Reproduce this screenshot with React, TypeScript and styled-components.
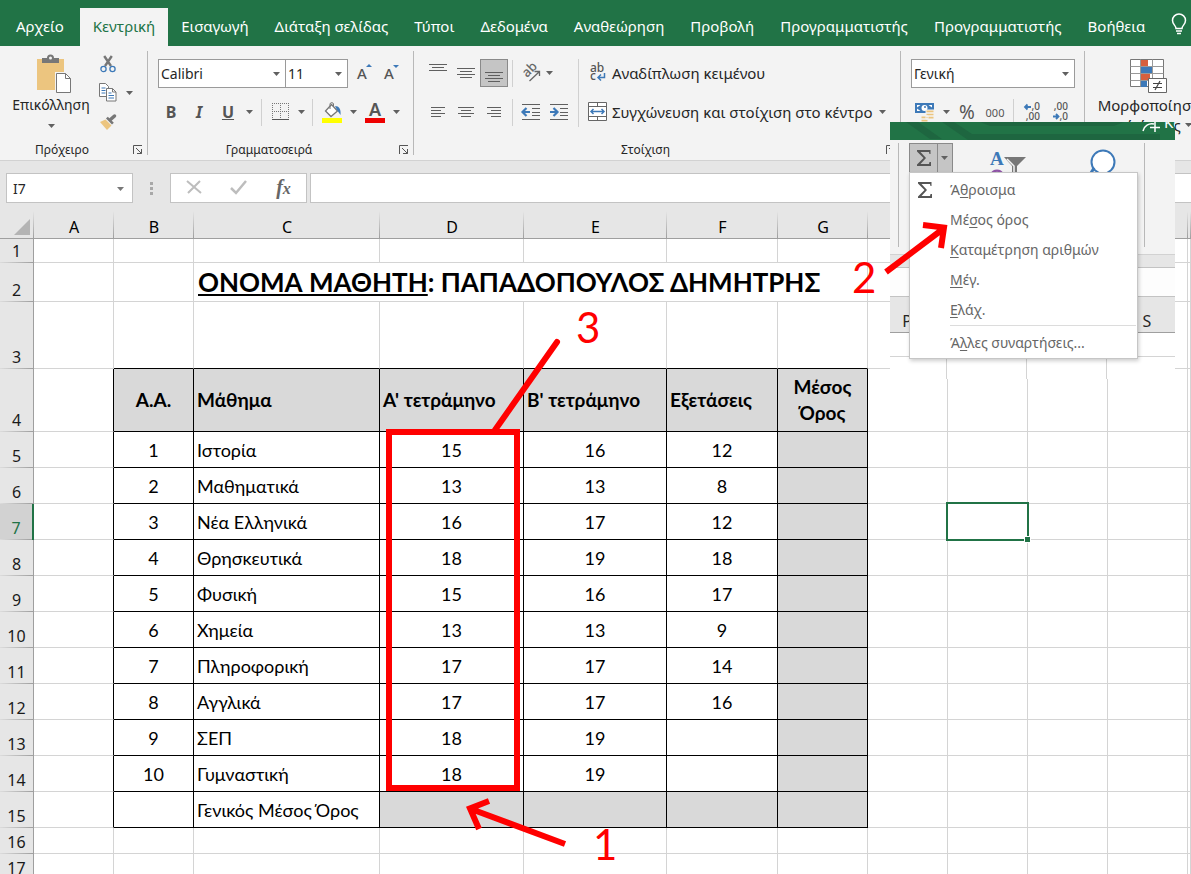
import React from 'react';
import styled, { createGlobalStyle, css } from 'styled-components';

const UI = '"Noto Sans", "Open Sans", sans-serif';
const SHEET = 'Lato, "Noto Sans", sans-serif';
const GREEN = '#217346';
const BLUE = '#3d79b8';
const INK = '#555555';

const GlobalStyle = createGlobalStyle`
  *, *::before, *::after { box-sizing: border-box; }
  body { margin: 0; background: #ffffff; font-family: ${UI}; color: #262626; }
  button, input, select { font: inherit; color: inherit; }
  svg { overflow: visible; }
`;

const Page = styled.div`
  position: relative;
  height: 100vh;
  overflow: hidden;
  display: flex;
  flex-direction: column;
`;

/* ---------- tabs ---------- */
const TabBar = styled.nav`
  flex: none;
  height: 46px;
  padding: 8px 0 0 3px;
  background: ${GREEN};
  display: flex;
`;

const Tab = styled.button<{ $active?: boolean }>`
  flex: none;
  height: 38px;
  padding: 0 13px 2px;
  border: 0;
  font-size: 15px;
  line-height: 20px;
  white-space: nowrap;
  background: ${p => (p.$active ? '#f3f3f3' : 'transparent')};
  color: ${p => (p.$active ? GREEN : '#ffffff')};
  margin-left: ${p => (p.$active ? '3px' : '0')};
`;

/* ---------- ribbon ---------- */
const Ribbon = styled.div`
  flex: none;
  height: 115px;
  display: flex;
  overflow: hidden;
  background: #f3f3f3;
  border-bottom: 1px solid #d2d2d2;
`;

const Group = styled.section<{ $w?: number }>`
  flex: ${p => (p.$w ? `0 0 ${p.$w}px` : '1 0 auto')};
  display: flex;
  flex-direction: column;
  padding-top: 13px;
`;

const Divider = styled.div`
  flex: none;
  width: 1px;
  margin: 5px 0;
  background: #b8b8b8;
`;

const Body = styled.div<{ $pad?: number }>`
  display: flex;
  height: 67px;
  padding-left: ${p => p.$pad ?? 10}px;
`;

const Rows = styled.div`
  flex: none;
  display: flex;
  flex-direction: column;
  gap: 11px;
`;

const Line = styled.div<{ $gap?: number }>`
  display: flex;
  align-items: center;
  height: 28px;
  gap: ${p => p.$gap ?? 0}px;
`;

const GroupFoot = styled.div`
  margin-top: 15px;
  display: flex;
  align-items: center;
  height: 18px;
  font-size: 12px;
  line-height: 18px;
`;

const GroupLabel = styled.span`
  flex: 1;
  text-align: center;
`;

const Launcher = styled.button`
  width: 23px;
  height: 18px;
  padding: 0 0 0 9px;
  border: 0;
  background: none;
  display: flex;
  align-items: center;
`;

const Tool = styled.button<{ $w?: number; $on?: boolean }>`
  flex: none;
  width: ${p => p.$w ?? 28}px;
  height: 28px;
  padding: 0;
  display: flex;
  align-items: center;
  justify-content: center;
  border: ${p => (p.$on ? '1px solid #8a8a8a' : '0')};
  background: ${p => (p.$on ? '#c5c5c5' : 'transparent')};
  font-size: 16px;
  color: ${INK};
`;

const WideTool = styled.button`
  flex: none;
  height: 28px;
  padding: 0;
  border: 0;
  background: none;
  display: flex;
  align-items: center;
  gap: 4px;
  font-size: 15px;
  white-space: nowrap;
`;

const BigTool = styled.button<{ $w: number; $size: number }>`
  flex: none;
  width: ${p => p.$w}px;
  padding: 0;
  height: 76px;
  border: 0;
  background: none;
  display: flex;
  flex-direction: column;
  align-items: center;
  font-size: ${p => p.$size}px;
  line-height: 20px;
  white-space: nowrap;
  > svg { flex: none; }
  span { display: flex; align-items: center; gap: 4px; }
`;

const PasteTool = styled(BigTool)`
  margin-top: -5px;
  height: 80px;
  span { margin: 1px 0 9px; }
`;

const Rule = styled.span<{ $tall?: boolean }>`
  flex: none;
  width: 1px;
  height: ${p => (p.$tall ? '68px' : '27px')};
  margin: 0 ${p => (p.$tall ? '9px 0 5px' : '5px')};
  background: #d0d0d0;
`;

const SmallRule = styled(Rule)`
  margin: 0 4px;
`;

const Picker = styled.div<{ $w: number }>`
  position: relative;
  flex: none;
  width: ${p => p.$w}px;
  height: 29px;
  border: 1px solid #9a9a9a;
  background: #ffffff;
  & + & { border-left: 0; }
  select {
    width: 100%;
    height: 27px;
    padding: 0 2px;
    border: 0;
    background: none;
    appearance: none;
    font-size: 14px;
  }
  svg { position: absolute; right: 5px; top: 12px; pointer-events: none; }
`;

const Stack = styled.div`
  display: flex;
  flex-direction: column;
  gap: 10px;
  margin-top: -5px;
`;

const StackRow = styled.div`
  display: flex;
  align-items: center;
  height: 19px;
  gap: 1px;
`;

const SmallTool = styled(Tool)`
  height: 19px;
`;

const PercentTool = styled(Tool)`
  font-size: 19px;
`;

const ThousandsTool = styled(Tool)`
  font-size: 11px;
`;

/* ---------- formula bar ---------- */
const FormulaBar = styled.div`
  flex: none;
  height: 50px;
  padding: 12px 0 8px 6px;
  background: #e6e6e6;
  display: flex;
`;

const barBox = css`
  height: 30px;
  background: #ffffff;
  border: 1px solid #c3c3c3;
`;

const NameBox = styled.div`
  ${barBox}
  position: relative;
  flex: none;
  width: 127px;
  input {
    width: 100px;
    height: 28px;
    padding: 0 6px;
    border: 0;
    outline: 0;
    background: none;
    font-size: 14px;
  }
  svg { position: absolute; right: 8px; top: 13px; }
`;

const Dots = styled.div`
  flex: none;
  width: 37px;
  display: flex;
  flex-direction: column;
  align-items: center;
  justify-content: center;
  height: 30px;
  gap: 2px;
  i { width: 3px; height: 3px; background: #a8a8a8; }
`;

const FormulaButtons = styled.div`
  ${barBox}
  flex: none;
  width: 137px;
  display: flex;
  align-items: center;
  button { flex: 1; height: 28px; padding: 0; border: 0; background: none; }
`;

const FxButton = styled.button`
  font: italic 700 20px/24px "Liberation Serif", serif;
  color: #666666;
  small { font-size: 16px; }
`;

const FormulaInput = styled.input`
  ${barBox}
  flex: 1;
  margin-left: 3px;
  border-right: 0;
  outline: 0;
  padding: 0 6px;
`;

/* ---------- sheet ---------- */
const Sheet = styled.table`
  flex: none;
  width: 100%;
  min-width: 1188px;
  table-layout: fixed;
  border-collapse: separate;
  border-spacing: 0;
  font-family: ${SHEET};
  font-size: 18px;
  line-height: 22px;
  color: #000000;
`;

const ColHead = styled.th`
  height: 28px;
  padding: 4px 0 0;
  font: 400 16px/20px ${UI};
  border-bottom: 1px solid #9f9f9f;
  background: linear-gradient(#e6e6e6, #9f9f9f) right / 1px 100% no-repeat #e6e6e6;
`;

const Corner = styled(ColHead)`
  text-align: right;
  line-height: 0;
  padding: 4px 4px 0 0;
`;

const RowHead = styled.th<{ $h: number; $on?: boolean }>`
  height: ${p => p.$h}px;
  padding: 0 0 2px;
  vertical-align: bottom;
  font: 400 16px/20px ${UI};
  border-right: ${p => (p.$on ? `2px solid ${GREEN}` : '1px solid #9f9f9f')};
  color: ${p => (p.$on ? GREEN : '#1a1a1a')};
  background: linear-gradient(90deg, #dcdcdc, #9f9f9f) bottom / 100% 1px no-repeat
    ${p => (p.$on ? '#d2d2d2' : '#e6e6e6')};
`;

type CellProps = { $r?: boolean; $b?: boolean; $fill?: boolean; $left?: boolean; $bold?: boolean };
const Cell = styled.td<CellProps>`
  position: relative;
  padding: ${p => (p.$left ? '0 0 0 3px' : '0')};
  text-align: ${p => (p.$left ? 'left' : 'center')};
  white-space: nowrap;
  font-weight: ${p => (p.$bold ? 700 : 400)};
  font-size: ${p => (p.$bold ? 19 : 18)}px;
  background: ${p => (p.$fill ? '#d9d9d9' : '#ffffff')};
  border-right: 1px solid ${p => (p.$r ? '#000000' : '#d4d4d4')};
  border-bottom: 1px solid ${p => (p.$b ? '#000000' : '#d4d4d4')};
`;

const TitleCell = styled(Cell)`
  font-size: 26px;
  line-height: 34px;
  font-weight: 700;
  padding-left: 4px;
`;

const HeadCell = styled(Cell)`
  line-height: 26px;
`;

const Selection = styled.span`
  position: absolute;
  z-index: 1;
  inset: -2px;
  border: 2px solid ${GREEN};
  &::after {
    content: '';
    position: absolute;
    right: -4px;
    bottom: -4px;
    width: 7px;
    height: 7px;
    background: ${GREEN};
    border: 1px solid #ffffff;
  }
`;

/* ---------- floating excerpt with the AutoSum menu ---------- */
const Excerpt = styled.aside`
  position: absolute;
  left: 890px;
  top: 122px;
  width: 285px;
  height: 257px;
  overflow: hidden;
  background: #ffffff;
  display: flex;
  flex-direction: column;
`;

const ExcerptTop = styled.div`
  flex: none;
  height: 18px;
  background: ${GREEN};
  display: flex;
  overflow: hidden;
  color: #ffffff;
  font-size: 15px;
  line-height: 20px;
  span { flex: none; margin: -10px 0 0 4px; }
  svg { flex: none; overflow: hidden; }
`;

const ExcerptRibbon = styled.div`
  flex: none;
  height: 114px;
  background: #f3f3f3;
  padding: 3px 0 0 8px;
  display: flex;
  align-items: flex-start;
`;

const ExcerptRule = styled.i`
  flex: none;
  width: 1px;
  height: 104px;
  background: #b8b8b8;
`;

const SumButton = styled.button`
  flex: none;
  height: 30px;
  padding: 0;
  width: 44px;
  margin: 0 36px 0 10px;
  border: 1px solid #8a8a8a;
  background: linear-gradient(#8a8a8a, #8a8a8a) 27px 0 / 1px 100% no-repeat #c5c5c5;
  display: grid;
  grid-template-columns: 27px 15px;
  align-items: center;
  justify-items: center;
`;

const SortSlot = styled.div`
  flex: none;
  height: 30px;
  padding-top: 5px;
`;

const FindSlot = styled.div`
  flex: none;
  width: 117px;
  padding: 6px 0 0 62px;
`;

const ExcerptBand = styled.div`
  flex: none;
  height: 14px;
  background: #e6e6e6;
  border-top: 1px solid #d2d2d2;
  border-bottom: 1px solid #c3c3c3;
`;

const ExcerptFormula = styled.div`
  flex: none;
  height: 29px;
  background: #fdfdfd;
  border-bottom: 1px solid #c3c3c3;
`;

const ExcerptGrid = styled.div<{ $head?: boolean }>`
  flex: none;
  display: grid;
  grid-template-columns: repeat(4, 80px);
  margin-left: -23px;
  width: 320px;
  text-align: center;
  font-size: 16px;
  line-height: 20px;
  background: ${p => (p.$head ? '#e6e6e6' : '#ffffff')};
  height: ${p => (p.$head ? 36 : 24)}px;
  border-bottom: 1px solid ${p => (p.$head ? '#9f9f9f' : '#d4d4d4')};
  padding-top: ${p => (p.$head ? 14 : 0)}px;
  span { border-right: ${p => (p.$head ? '0' : '1px solid #d4d4d4')}; }
`;

const Menu = styled.ul`
  position: absolute;
  left: 909px;
  top: 172px;
  width: 229px;
  margin: 0;
  padding: 2px 1px 0;
  list-style: none;
  background: #ffffff;
  border: 1px solid #c6c6c6;
  box-shadow: 1px 2px 4px rgba(0, 0, 0, 0.2);
`;

const MenuItem = styled.li<{ $last?: boolean }>`
  ${p => p.$last && css`
    &::before {
      content: '';
      display: block;
      height: 1px;
      margin: 0 0 2px 39px;
      background: #dcdcdc;
    }
  `}
  button {
    display: grid;
    grid-template-columns: 39px 1fr;
    align-items: center;
    width: 100%;
    height: 30px;
    padding: 0;
    border: 0;
    background: none;
    text-align: left;
    font-size: 14px;
    line-height: 20px;
    color: #666666;
  }
  u { text-underline-offset: 2px; }
  svg { margin-left: 5px; }
`;

/* ---------- red annotations ---------- */
const Marks = styled.svg`
  position: absolute;
  left: 0;
  top: 0;
  pointer-events: none;
`;

const Mark = styled.span<{ $x: number; $y: number }>`
  position: absolute;
  left: ${p => p.$x}px;
  top: ${p => p.$y}px;
  font: 400 42px/44px ${SHEET};
  color: #ff0000;
`;

/* ---------- icons ---------- */
const Caret = ({ color = '#606060' }: { color?: string }) => (
  <svg width="7" height="4" viewBox="0 0 7 4"><path d="M0 0h7L3.500 4z" fill={color} /></svg>
);

const Bars = ({ rows, w = 18, h = 20 }: { rows: [number, number, number][]; w?: number; h?: number }) => (
  <svg width={w} height={h}>
    {rows.map(([x, y, len]) => <rect key={y} x={x} y={y} width={len} height="1" fill="#5f5f5f" />)}
  </svg>
);

const Bulb = () => (
  <svg width="16" height="22" viewBox="0 0 16 22" fill="none" stroke="#fff" strokeWidth="1.500">
    <path d="M5 15.500c0-3-3.500-4-3.500-8a6.500 6.500 0 0 1 13 0c0 4-3.500 5-3.500 8zM5 18h6M6 20.500h4" />
  </svg>
);

const PasteIcon = () => (
  <svg width="30" height="40" viewBox="0 0 30 40">
    <rect x="1" y="5" width="27" height="31" fill="#ecc57f" />
    <path d="M6 9V4h5a3.500 3.500 0 0 1 7 0h5v5z" fill="#777" />
    <circle cx="14.500" cy="4" r="1.500" fill="#f3f3f3" />
    <path d="M19 18h11l6 5v17H19z" fill="#f3f3f3" />
    <path d="M20.500 19.500h9l5 5v14h-14z" fill="#fff" stroke="#777" />
    <path d="M29.500 19.500v5h5" fill="none" stroke="#777" />
  </svg>
);

const CutIcon = () => (
  <svg width="16" height="19" viewBox="0 0 16 19" fill="none">
    <path d="M4.200 2L11 12M11.800 2L5 12" stroke="#777" strokeWidth="2.400" />
    <circle cx="3.500" cy="15" r="2.600" stroke={BLUE} strokeWidth="1.300" />
    <circle cx="12.500" cy="15" r="2.600" stroke={BLUE} strokeWidth="1.300" />
  </svg>
);

const CopyIcon = () => (
  <svg width="18" height="19" viewBox="0 0 18 19">
    <path d="M.5.5h6l3 3v10h-9z" fill="#fff" stroke="#777" />
    <path d="M2.500 5h4M2.500 7.500h4M2.500 10h4" stroke={BLUE} />
    <path d="M7.500 5.500h6l3.500 3.500v9H7.500z" fill="#fff" stroke="#777" />
    <path d="M13.500 5.500V9H17" fill="none" stroke="#777" />
    <path d="M9.500 10h3M9.500 12.500h5.500M9.500 15h5.500" stroke={BLUE} />
  </svg>
);

const BrushIcon = () => (
  <svg width="18" height="17" viewBox="0 0 18 17">
    <path d="M1 9l5.500-2.500 6 6L8 17z" fill="#ecc57f" />
    <path d="M7 5.500l1.800-1.800 6 6-1.800 1.800z" fill="#777" />
    <path d="M11.500 6.500L15.500 3" stroke="#777" strokeWidth="3.500" strokeLinecap="round" />
  </svg>
);

const LauncherIcon = () => (
  <svg width="10" height="10" viewBox="0 0 10 10" fill="none" stroke="#555">
    <path d="M.5 9V.5H9M3 3l5.500 5.500M8.500 4v4.500H4" />
  </svg>
);

const FontStep = ({ down }: { down?: boolean }) => (
  <svg width="16" height="20" viewBox="0 0 16 20">
    <text x="1" y="16" fontFamily={UI} fontSize="15" fontWeight="500" fill="#555">A</text>
    <path d={down ? 'M10 2h6l-3 3z' : 'M10 4h6l-3-3z'} fill={BLUE} />
  </svg>
);

const BorderIcon = () => (
  <svg width="18" height="18" viewBox="0 0 18 18" fill="none" stroke="#777">
    <path d="M0 .5h17M0 8.500h17M.5 0v16M8.500 0v16M16.500 0v16" strokeDasharray="1 1" shapeRendering="crispEdges" />
    <path d="M0 16.500h17" stroke="#555" />
  </svg>
);

const FillIcon = () => (
  <svg width="20" height="22" viewBox="0 0 20 22">
    <path d="M9.500 3.500l6 6.500-6.500 5.500L3.500 10z" fill="#fff" stroke="#777" strokeWidth="1.300" />
    <path d="M8 8V3a1.800 1.800 0 0 1 3.500 0v3" fill="none" stroke="#777" />
    <path d="M13 5c4 0 6 3 5.500 9L15 9z" fill={BLUE} />
    <rect y="17" width="20" height="5" fill="#ffff00" />
  </svg>
);

const FontColorIcon = () => (
  <svg width="20" height="22" viewBox="0 0 20 22">
    <text x="10" y="15" textAnchor="middle" fontFamily={UI} fontSize="18" fontWeight="600" fill={INK}>A</text>
    <rect y="17" width="20" height="5" fill="#ee0000" />
  </svg>
);

const OrientIcon = () => (
  <svg width="20" height="20" viewBox="0 0 20 20">
    <text x="0" y="0" transform="translate(6 15) rotate(-45)" fontFamily={UI} fontSize="13" fontWeight="500" fill="#666">ab</text>
    <path d="M8.500 18L18 9M13.500 8.500h5V13" fill="none" stroke="#666" strokeWidth="1.300" />
  </svg>
);

const IndentIcon = ({ right }: { right?: boolean }) => (
  <svg width="18" height="18" viewBox="0 0 18 18">
    <path d="M0 1.500h18M10 5.500h8M10 9.500h8M10 12.500h8M0 16.500h18" stroke="#5f5f5f" />
    <path
      d={right ? 'M0 9h7M3.500 5l4 4-4 4' : 'M8 9H1M4.500 5l-4 4 4 4'}
      fill="none" stroke={BLUE} strokeWidth="2.200"
    />
  </svg>
);

const WrapIcon = () => (
  <svg width="20" height="20" viewBox="0 0 20 20">
    <text x="2" y="9" fontFamily={UI} fontSize="12" fontWeight="500" fill={INK}>ab</text>
    <text x="2" y="17" fontFamily={UI} fontSize="12" fontWeight="500" fill={INK}>c</text>
    <path d="M16.500 10v4.500h-6M13 11.500l-3 3 3 3" fill="none" stroke={BLUE} strokeWidth="1.500" />
  </svg>
);

const MergeIcon = () => (
  <svg width="20" height="20" viewBox="0 0 20 20" fill="none">
    <path d="M.5.5h18v18H.5zM.5 4.500h18M.5 14.500h18M9.500.5v4M9.500 14.500v4" fill="#fff" stroke="#666" />
    <path d="M3 9.500h13M5.500 7L3 9.500 5.500 12M13.500 7L16 9.500 13.500 12" stroke={BLUE} strokeWidth="1.500" />
  </svg>
);

const MoneyIcon = () => (
  <svg width="20" height="20" viewBox="0 0 20 20">
    <path d="M0 1h19v10H0z" fill={BLUE} />
    <path d="M2 3h3.500L2 5.500zM17 3h-3.500L17 5.500zM2 9h3.500L2 6.500z" fill="#fff" />
    <circle cx="9.500" cy="6" r="3" fill="#fff" />
    <circle cx="10" cy="5" r="1" fill={BLUE} />
    <path d="M11 8h8v3h-8zM11 11h8v3h-8zM6 14h7v3H6zM11 14h8v3h-8zM6 17h7v3H6z" fill="#ecc57f" stroke="#f3f3f3" />
  </svg>
);

const DecimalIcon = ({ less }: { less?: boolean }) => (
  <svg width="18" height="20" viewBox="0 0 18 20" fontFamily={UI} fontSize="10" fontWeight="500">
    <text x="17" y="8" textAnchor="end" fill={INK}>{less ? ',00' : ',0'}</text>
    <text x="17" y="18" textAnchor="end" fill={INK}>{less ? ',0' : ',00'}</text>
    <path
      d={less ? 'M2 14.500h6M5 12l2.500 2.500L5 17' : 'M8 5H2M4.500 2.500L2 5l2.500 2.500'}
      fill="none" stroke={BLUE} strokeWidth="1.800"
    />
  </svg>
);

const CondIcon = () => (
  <svg width="38" height="36" viewBox="0 0 38 36">
    <path d="M.5.5h33v27H.5z" fill="#fff" stroke="#777" />
    <path d="M11 1h7v6h-7zM11 15h9v6h-9z" fill="#d6603e" />
    <path d="M11 8h11v6H11zM11 22h6v6h-6z" fill={BLUE} />
    <path d="M.5 7.500h33M.5 14.500h33M.5 21.500h33M10.500.5v27M22.500.5v27" fill="none" stroke="#999" />
    <path d="M18.500 19.500h18v14h-18z" fill="#fff" stroke="#666" />
    <path d="M23 24.500h9M23 28.500h9M30 22l-5 9" stroke="#444" strokeWidth="1.200" />
  </svg>
);

const Sigma = () => (
  <svg width="18" height="18" viewBox="0 0 18 18">
    <path d="M15.500 5V1H2v1.500L8.500 9 2 15.500V17h14v-4h-1.500l-.5 2H5.500L11 9 5.500 3h8.500l.5 2z" fill={INK} />
  </svg>
);

const SortFilterIcon = () => (
  <svg width="38" height="30" viewBox="0 0 38 30">
    <text x="1" y="17" fontFamily='"Liberation Serif", serif' fontSize="19" fontWeight="700" fill={BLUE}>A</text>
    <path d="M2.500 26a6 5.500 0 0 1 11 0" fill="none" stroke="#9055a8" strokeWidth="2.200" />
    <path d="M15 9h22l-9 9v10h-5V18z" fill="#777" />
    <path d="M18 11l7 7v10" fill="none" stroke="#f3f3f3" strokeWidth="1.500" />
  </svg>
);

const FindIcon = () => (
  <svg width="28" height="24" viewBox="0 0 28 24">
    <circle cx="14" cy="13" r="11.500" fill="#fff" stroke={BLUE} strokeWidth="2" />
    <path d="M5 19l-3 5" stroke={BLUE} strokeWidth="3" />
  </svg>
);

const StripArt = () => (
  <svg width="270" height="18" viewBox="0 0 270 18">
    <path d="M16 0h12l24 17H40zM52 0h12l18 12h188v6H78zM90 0h144l-10 4H100z" fill="#1e6640" />
    <path d="M253 9a9 9 0 0 1 11-7M265 0v10M260 5.500h10" fill="none" stroke="#fff" strokeWidth="1.500" />
  </svg>
);

/* ---------- data ---------- */
const tabs = ['Αρχείο', 'Κεντρική', 'Εισαγωγή', 'Διάταξη σελίδας', 'Τύποι', 'Δεδομένα', 'Αναθεώρηση',
  'Προβολή', 'Προγραμματιστής', 'Προγραμματιστής', 'Βοήθεια'];

const columns: [string, number][] = [['A', 80], ['B', 80], ['C', 186], ['D', 144], ['E', 143], ['F', 111],
  ['G', 90], ['H', 80], ['I', 80], ['J', 80], ['K', 80]];

const grades: string[][] = [
  ['1', 'Ιστορία', '15', '16', '12'],
  ['2', 'Μαθηματικά', '13', '13', '8'],
  ['3', 'Νέα Ελληνικά', '16', '17', '12'],
  ['4', 'Θρησκευτικά', '18', '19', '18'],
  ['5', 'Φυσική', '15', '16', '17'],
  ['6', 'Χημεία', '13', '13', '9'],
  ['7', 'Πληροφορική', '17', '17', '14'],
  ['8', 'Αγγλικά', '17', '17', '16'],
  ['9', 'ΣΕΠ', '18', '19', ''],
  ['10', 'Γυμναστική', '18', '19', ''],
];

const Blank = ({ n }: { n: number }) => <>{Array.from({ length: n }, (_, i) => <Cell key={i} />)}</>;

const Foot = ({ label, launch }: { label: string; launch?: boolean }) => (
  <GroupFoot>
    <GroupLabel>{label}</GroupLabel>
    {launch && <Launcher aria-label={label}><LauncherIcon /></Launcher>}
  </GroupFoot>
);

export default function App() {
  return (
    <Page>
      <GlobalStyle />
      <TabBar>
        {tabs.map((t, i) => <Tab key={i} $active={i === 1}>{t}</Tab>)}
        <Tab aria-label="Ιδέες"><Bulb /></Tab>
      </TabBar>

      <Ribbon>
        <Group $w={147}>
          <Body $pad={6}>
            <PasteTool $w={90} $size={14}><PasteIcon /><span>Επικόλληση</span><Caret /></PasteTool>
            <Stack>
              <StackRow><SmallTool $w={24} aria-label="Αποκοπή"><CutIcon /></SmallTool></StackRow>
              <StackRow>
                <SmallTool $w={24} aria-label="Αντιγραφή"><CopyIcon /></SmallTool>
                <SmallTool $w={16} aria-label="Επιλογές αντιγραφής"><Caret /></SmallTool>
              </StackRow>
              <StackRow><SmallTool $w={24} aria-label="Πινέλο μορφοποίησης"><BrushIcon /></SmallTool></StackRow>
            </Stack>
          </Body>
          <Foot label="Πρόχειρο" launch />
        </Group>
        <Divider />

        <Group $w={265}>
          <Body>
            <Rows>
              <Line>
                <Picker $w={128}>
                  <select aria-label="Γραμματοσειρά"><option>Calibri</option></select><Caret />
                </Picker>
                <Picker $w={62}>
                  <select aria-label="Μέγεθος"><option>11</option></select><Caret />
                </Picker>
                <Tool $w={32} aria-label="Αύξηση"><FontStep /></Tool>
                <Tool $w={22} aria-label="Μείωση"><FontStep down /></Tool>
              </Line>
              <Line>
                <Tool $w={26}><b>B</b></Tool>
                <Tool $w={30}><b><i>I</i></b></Tool>
                <Tool><b><u>U</u></b></Tool>
                <Tool $w={14} aria-label="Υπογράμμιση"><Caret /></Tool>
                <Rule />
                <Tool aria-label="Περιγράμματα"><BorderIcon /></Tool>
                <Tool $w={12} aria-label="Επιλογές περιγράμματος"><Caret /></Tool>
                <Rule />
                <Tool aria-label="Χρώμα γεμίσματος"><FillIcon /></Tool>
                <Tool $w={14} aria-label="Επιλογές γεμίσματος"><Caret /></Tool>
                <Tool $w={30} aria-label="Χρώμα γραμματοσειράς"><FontColorIcon /></Tool>
                <Tool $w={12} aria-label="Επιλογές χρώματος"><Caret /></Tool>
              </Line>
            </Rows>
          </Body>
          <Foot label="Γραμματοσειρά" launch />
        </Group>
        <Divider />

        <Group $w={486}>
          <Body>
            <Rows>
              <Line>
                <Tool aria-label="Επάνω"><Bars rows={[[0, 1, 18], [3, 4, 12], [0, 7, 18]]} /></Tool>
                <Tool aria-label="Μέση"><Bars rows={[[0, 5, 18], [3, 8, 12], [0, 11, 18], [3, 14, 12]]} /></Tool>
                <Tool $on aria-label="Κάτω"><Bars rows={[[0, 9, 18], [3, 12, 12], [0, 15, 18], [3, 18, 12]]} /></Tool>
                <SmallRule />
                <Tool aria-label="Προσανατολισμός"><OrientIcon /></Tool>
                <Tool $w={8} aria-label="Επιλογές προσανατολισμού"><Caret /></Tool>
              </Line>
              <Line>
                <Tool aria-label="Αριστερά"><Bars rows={[[2, 5, 14], [2, 8, 10], [2, 11, 14], [2, 14, 10]]} /></Tool>
                <Tool aria-label="Κέντρο"><Bars rows={[[1, 5, 16], [4, 8, 10], [1, 11, 16], [4, 14, 10]]} /></Tool>
                <Tool aria-label="Δεξιά"><Bars rows={[[2, 5, 14], [6, 8, 10], [2, 11, 14], [6, 14, 10]]} /></Tool>
                <SmallRule />
                <Tool aria-label="Μείωση εσοχής"><IndentIcon /></Tool>
                <Tool aria-label="Αύξηση εσοχής"><IndentIcon right /></Tool>
              </Line>
            </Rows>
            <Rule $tall />
            <Rows>
              <Line><WideTool><WrapIcon />Αναδίπλωση κειμένου</WideTool></Line>
              <Line $gap={6}>
                <WideTool><MergeIcon />Συγχώνευση και στοίχιση στο κέντρο</WideTool>
                <Tool $w={8} aria-label="Επιλογές συγχώνευσης"><Caret /></Tool>
              </Line>
            </Rows>
          </Body>
          <Foot label="Στοίχιση" launch />
        </Group>
        <Divider />

        <Group $w={183}>
          <Body>
            <Rows>
              <Line>
                <Picker $w={164}>
                  <select aria-label="Μορφή αριθμού"><option>Γενική</option></select><Caret />
                </Picker>
              </Line>
              <Line>
                <Tool aria-label="Λογιστική μορφή"><MoneyIcon /></Tool>
                <Tool $w={14} aria-label="Επιλογές νομίσματος"><Caret /></Tool>
                <PercentTool>%</PercentTool>
                <ThousandsTool>000</ThousandsTool>
                <SmallRule />
                <Tool aria-label="Αύξηση δεκαδικών"><DecimalIcon /></Tool>
                <Tool aria-label="Μείωση δεκαδικών"><DecimalIcon less /></Tool>
              </Line>
            </Rows>
          </Body>
          <Foot label="Αριθμός" launch />
        </Group>
        <Divider />

        <Group>
          <Body>
            <BigTool $w={108} $size={15}>
              <CondIcon />
              <span>Μορφοποίηση</span>
              <span>υπό όρους <Caret /></span>
            </BigTool>
          </Body>
        </Group>
      </Ribbon>

      <FormulaBar>
        <NameBox>
          <input aria-label="Πλαίσιο ονόματος" defaultValue="I7" />
          <Caret color="#777" />
        </NameBox>
        <Dots><i /><i /><i /></Dots>
        <FormulaButtons>
          <button aria-label="Άκυρο">
            <svg width="16" height="14" viewBox="0 0 16 14"><path d="M1 1l14 12M14 1L2 13" stroke="#bdbdbd" strokeWidth="2" /></svg>
          </button>
          <button aria-label="Εισαγωγή">
            <svg width="18" height="14" viewBox="0 0 18 14"><path d="M1 8l5 5L16 1" fill="none" stroke="#bdbdbd" strokeWidth="2.500" /></svg>
          </button>
          <FxButton>f<small>x</small></FxButton>
        </FormulaButtons>
        <FormulaInput aria-label="Γραμμή τύπων" />
      </FormulaBar>

      <Sheet>
        <colgroup>
          <col style={{ width: 34 }} />
          {columns.map(([c, w]) => <col key={c} style={{ width: w }} />)}
          <col />
        </colgroup>
        <thead>
          <tr>
            <Corner><svg width="16" height="16"><path d="M16 0v16H0z" fill="#b4b4b4" /></svg></Corner>
            {columns.map(([c]) => <ColHead key={c}>{c}</ColHead>)}
            <ColHead />
          </tr>
        </thead>
        <tbody>
          <tr><RowHead $h={24}>1</RowHead><Blank n={12} /></tr>
          <tr>
            <RowHead $h={39}>2</RowHead>
            <Blank n={2} />
            <TitleCell colSpan={5} $left><u>ΟΝΟΜΑ ΜΑΘΗΤΗ</u>: ΠΑΠΑΔΟΠΟΥΛΟΣ ΔΗΜΗΤΡΗΣ</TitleCell>
            <Blank n={5} />
          </tr>
          <tr>
            <RowHead $h={67}>3</RowHead>
            <Cell />
            {Array.from({ length: 6 }, (_, i) => <Cell key={i} $b />)}
            <Blank n={5} />
          </tr>
          <tr>
            <RowHead $h={63}>4</RowHead>
            <Cell $r />
            <Cell $r $b $fill $bold>Α.Α.</Cell>
            <Cell $r $b $fill $bold $left>Μάθημα</Cell>
            <Cell $r $b $fill $bold $left>Α' τετράμηνο</Cell>
            <Cell $r $b $fill $bold $left>Β' τετράμηνο</Cell>
            <Cell $r $b $fill $bold $left>Εξετάσεις</Cell>
            <HeadCell $r $b $fill $bold>Μέσος<br />Όρος</HeadCell>
            <Blank n={5} />
          </tr>
          {grades.map((g, i) => (
            <tr key={g[0]}>
              <RowHead $h={36} $on={i === 2}>{i + 5}</RowHead>
              <Cell $r />
              {g.map((v, j) => <Cell key={j} $r $b $left={j === 1}>{v}</Cell>)}
              <Cell $r $b $fill />
              <Cell />
              <Cell>{i === 2 && <Selection />}</Cell>
              <Blank n={3} />
            </tr>
          ))}
          <tr>
            <RowHead $h={36}>15</RowHead>
            <Cell $r />
            <Cell $r $b />
            <Cell $r $b $left>Γενικός Μέσος Όρος</Cell>
            {Array.from({ length: 4 }, (_, i) => <Cell key={i} $r $b $fill />)}
            <Blank n={5} />
          </tr>
          <tr><RowHead $h={26}>16</RowHead><Blank n={12} /></tr>
          <tr><RowHead $h={26}>17</RowHead><Blank n={12} /></tr>
        </tbody>
      </Sheet>

      <Excerpt>
        <ExcerptTop><StripArt /><span>Κο</span></ExcerptTop>
        <ExcerptRibbon>
          <ExcerptRule />
          <SumButton aria-label="Αυτόματη άθροιση"><Sigma /><Caret /></SumButton>
          <SortSlot><SortFilterIcon /></SortSlot>
          <FindSlot><FindIcon /></FindSlot>
          <ExcerptRule />
        </ExcerptRibbon>
        <ExcerptBand />
        <ExcerptFormula />
        <ExcerptGrid $head><span>P</span><span /><span /><span>S</span></ExcerptGrid>
        <ExcerptGrid><span /><span /><span /><span /></ExcerptGrid>
        <ExcerptGrid><span /><span /><span /><span /></ExcerptGrid>
      </Excerpt>

      <Menu>
        <MenuItem><button><Sigma /><span>Ά<u>θ</u>ροισμα</span></button></MenuItem>
        <MenuItem><button><i /><span>Μέ<u>σ</u>ος όρος</span></button></MenuItem>
        <MenuItem><button><i /><span><u>Κ</u>αταμέτρηση αριθμών</span></button></MenuItem>
        <MenuItem><button><i /><span><u>Μ</u>έγ.</span></button></MenuItem>
        <MenuItem><button><i /><span><u>Ε</u>λάχ.</span></button></MenuItem>
        <MenuItem $last><button><i /><span>Ά<u>λ</u>λες συναρτήσεις...</span></button></MenuItem>
      </Menu>

      <Marks width="1191" height="874" fill="none" stroke="#ff0000">
        <rect x="389" y="432" width="128" height="356" strokeWidth="6" />
        <path d="M557 342L495 430" strokeWidth="6" strokeLinecap="round" />
        <path d="M565 844L471 809M489 801L470 808.500L479 829" strokeWidth="6" />
        <path d="M886 272L943 229M923 225L944 227.500L941 248" strokeWidth="6" />
      </Marks>
      <Mark $x={576} $y={305}>3</Mark>
      <Mark $x={852} $y={255}>2</Mark>
      <Mark $x={593} $y={822}>1</Mark>
    </Page>
  );
}
